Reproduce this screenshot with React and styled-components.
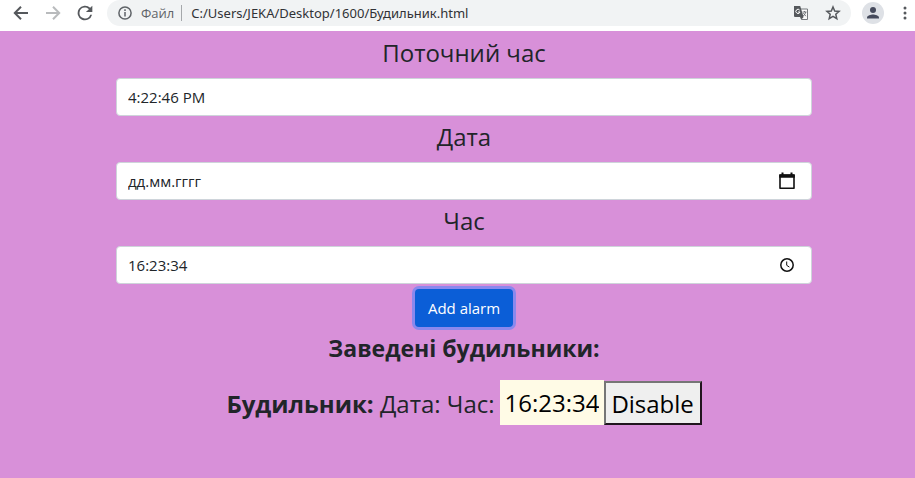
import React, { useState } from "react";
import styled, { createGlobalStyle } from "styled-components";

const GlobalStyle = createGlobalStyle`
  *, *::before, *::after { box-sizing: border-box; }
  body {
    margin: 0;
    background: #d890d9;
    color: #212529;
    font-family: "Open Sans", "Noto Sans", sans-serif;
  }
`;

const Toolbar = styled.header`
  display: flex;
  align-items: center;
  height: 31px;
  padding: 0 0 5px 10px;
  background: #fff;
`;

const IconButton = styled.button`
  display: grid;
  place-items: center;
  flex: none;
  width: ${(p) => p.$width || 32}px;
  height: 26px;
  padding: 0;
  border: 0;
  background: none;
  color: ${(p) => p.$color || "#55585c"};
`;

const AddressBar = styled.div`
  display: flex;
  align-items: center;
  flex: 1;
  min-width: 0;
  height: 26px;
  margin-left: 11px;
  padding: 0 2px 0 11px;
  border-radius: 13px;
  background: #f1f3f4;
  color: #5f6368;
`;

const Scheme = styled.span`
  margin-left: 9px;
  padding-right: 7px;
  border-right: 1px solid #a5a8ab;
  font-size: 13px;
  line-height: 16px;
`;

const UrlInput = styled.input`
  flex: 1;
  min-width: 0;
  padding: 0 0 0 9px;
  border: 0;
  outline: 0;
  background: none;
  color: #303236;
  font: 13px/20px "Noto Sans", "Open Sans", sans-serif;
`;

const Avatar = styled.span`
  display: grid;
  place-items: center;
  width: 22px;
  height: 22px;
  border-radius: 50%;
  background: #dee1e6;
`;

const Page = styled.main`
  display: flex;
  flex-direction: column;
  align-items: center;
  padding: 1px 103px 40px 116px;
`;

const Field = styled.div`
  display: flex;
  flex-direction: column;
  align-items: center;
  width: 100%;
`;

const Label = styled.label`
  height: 46px;
  font-size: 24px;
  line-height: 42px;
`;

const Control = styled.div`
  display: flex;
  align-items: center;
  width: 100%;
  height: 38px;
  padding: 0 8px 0 11px;
  border: 1px solid #ced4da;
  border-radius: 4px;
  background: #fff;
`;

const TextInput = styled.input`
  flex: 1;
  min-width: 0;
  padding: 0;
  border: 0;
  outline: 0;
  background: none;
  color: #212529;
  font: 15px/24px "Open Sans", "Noto Sans", sans-serif;

  &::placeholder {
    color: #212529;
    opacity: 1;
  }
`;

const AddButton = styled.button`
  height: 38px;
  margin-top: 5px;
  padding: 0 13px;
  border: 0;
  border-radius: 4px;
  outline: 0;
  background: #0b5ed7;
  box-shadow: 0 0 0 3px #8a88ed;
  color: #fff;
  font: 15px/24px "Open Sans", "Noto Sans", sans-serif;
`;

const Title = styled.h1`
  margin: 0 0 11px;
  font-size: 23px;
  font-weight: 700;
  line-height: 42px;
`;

const AlarmRow = styled.div`
  display: flex;
  align-items: flex-end;
  gap: 5px;
  font-size: 24px;
  line-height: 42px;
  white-space: nowrap;
`;

const AlarmControls = styled.div`
  display: flex;
  align-items: flex-end;
`;

const AlarmTime = styled.input`
  width: 104px;
  height: 45px;
  padding: 0 5px;
  border: 0;
  outline: 0;
  background: #fffbe6;
  color: #000;
  font: 24px/45px "Open Sans", "Noto Sans", sans-serif;
`;

const DisableButton = styled.button`
  width: 98px;
  height: 44px;
  padding: 2px 0 0;
  border: 2px solid;
  border-color: #767676 #21151f #21151f #767676;
  background: #efefef;
  color: #000;
  font: 24px/38px "Open Sans", "Noto Sans", sans-serif;
`;

function ArrowIcon({ forward }) {
  return (
    <svg width="16" height="16" viewBox="0 0 16 16" fill="none" stroke="currentColor" strokeWidth="2">
      <path d={forward ? "M1 8h13M8 1.8 14.2 8 8 14.2" : "M15 8H2M8 1.8 1.8 8 8 14.2"} />
    </svg>
  );
}

function ReloadIcon() {
  return (
    <svg width="22" height="22" viewBox="0 0 24 24" fill="currentColor">
      <path d="M17.65 6.35A8 8 0 1 0 19.73 14h-2.08A6 6 0 1 1 12 6c1.66 0 3.14.69 4.22 1.78L13 11h7V4z" />
    </svg>
  );
}

function InfoIcon() {
  return (
    <svg width="14" height="14" viewBox="0 0 14 14" fill="none" stroke="currentColor" strokeWidth="1.5">
      <circle cx="7" cy="7" r="6.1" />
      <path d="M7 6v4.5M7 3.3v1.6" />
    </svg>
  );
}

function TranslateIcon() {
  return (
    <svg width="16" height="16" viewBox="0 0 16 16">
      <path d="M7 4h7.5v10.5H8.5L7 11z" fill="#fafafa" stroke="#777a7e" />
      <path d="M1 1h6.2l3.4 11H2a1 1 0 0 1-1-1z" fill="#55585c" />
      <path d="M6.7 5.2A2.1 2.1 0 1 0 7 7H5" fill="none" stroke="#fff" />
      <path d="M9.5 7h4M11.5 6v1M12.8 7c-.4 1.8-1.4 3-2.6 4M10.3 8.2l2.6 3" fill="none" stroke="#66696d" strokeWidth=".9" />
      <path d="m8.5 14.5 2.1-2.5H7.5z" fill="#55585c" />
    </svg>
  );
}

function StarIcon() {
  return (
    <svg width="16" height="16" viewBox="0 0 16 16" fill="none" stroke="currentColor" strokeWidth="1.5">
      <path d="m8 2 1.7 4 4.4.4-3.3 2.9 1 4.3L8 11.3l-3.8 2.3 1-4.3-3.3-2.9 4.4-.4z" />
    </svg>
  );
}

function PersonIcon() {
  return (
    <svg width="14" height="14" viewBox="0 0 14 14" fill="#454a5c">
      <circle cx="7" cy="4" r="3" />
      <path d="M1 12.5v-1C1 9.3 5 8.4 7 8.4s6 .9 6 3.1v1z" />
    </svg>
  );
}

function MenuIcon() {
  return (
    <svg width="4" height="16" viewBox="0 0 4 16" fill="currentColor">
      <circle cx="2" cy="3" r="1.5" />
      <circle cx="2" cy="8" r="1.5" />
      <circle cx="2" cy="13" r="1.5" />
    </svg>
  );
}

function CalendarIcon() {
  return (
    <svg width="18" height="18" viewBox="0 0 18 18">
      <path d="M2 3h14v13.2H2z" fill="none" stroke="#111" strokeWidth="1.6" strokeLinejoin="round" />
      <path d="M1.2 2.4h15.6v3.4H1.2zM3.5.5h2v3h-2zM12.5.5h2v3h-2z" fill="#111" />
    </svg>
  );
}

function ClockIcon() {
  return (
    <svg width="16" height="16" viewBox="0 0 16 16" fill="none" stroke="#111">
      <circle cx="8" cy="8" r="6.2" strokeWidth="1.5" />
      <path d="M7.7 4.5v3.8l2.7 1.8" strokeWidth="1" />
    </svg>
  );
}

export default function App() {
  const [now, setNow] = useState("4:22:46 PM");
  const [date, setDate] = useState("");
  const [time, setTime] = useState("16:23:34");
  const [alarm, setAlarm] = useState("16:23:34");

  return (
    <>
      <GlobalStyle />
      <Toolbar>
        <IconButton $width={22} aria-label="Назад"><ArrowIcon /></IconButton>
        <IconButton $width={42} $color="#b9bbbd" aria-label="Вперед"><ArrowIcon forward /></IconButton>
        <IconButton $width={22} aria-label="Оновити"><ReloadIcon /></IconButton>
        <AddressBar>
          <InfoIcon />
          <Scheme>Файл</Scheme>
          <UrlInput aria-label="Адреса" defaultValue="C:/Users/JEKA/Desktop/1600/Будильник.html" />
          <IconButton aria-label="Перекласти"><TranslateIcon /></IconButton>
          <IconButton aria-label="Закладка"><StarIcon /></IconButton>
        </AddressBar>
        <IconButton $width={44} aria-label="Профіль"><Avatar><PersonIcon /></Avatar></IconButton>
        <IconButton $width={20} aria-label="Меню"><MenuIcon /></IconButton>
      </Toolbar>
      <Page>
        <Field>
          <Label htmlFor="now">Поточний час</Label>
          <Control>
            <TextInput id="now" value={now} onChange={(e) => setNow(e.target.value)} />
          </Control>
        </Field>
        <Field>
          <Label htmlFor="date">Дата</Label>
          <Control>
            <TextInput
              id="date"
              placeholder="дд.мм.гггг"
              value={date}
              onChange={(e) => setDate(e.target.value)}
            />
            <IconButton aria-label="Вибрати дату"><CalendarIcon /></IconButton>
          </Control>
        </Field>
        <Field>
          <Label htmlFor="time">Час</Label>
          <Control>
            <TextInput id="time" value={time} onChange={(e) => setTime(e.target.value)} />
            <IconButton aria-label="Вибрати час"><ClockIcon /></IconButton>
          </Control>
        </Field>
        <AddButton onClick={() => setAlarm(time)}>Add alarm</AddButton>
        <Title>Заведені будильники:</Title>
        <AlarmRow>
          <label htmlFor="alarm"><b>Будильник:</b> Дата: Час:</label>
          <AlarmControls>
            <AlarmTime id="alarm" value={alarm} onChange={(e) => setAlarm(e.target.value)} />
            <DisableButton>Disable</DisableButton>
          </AlarmControls>
        </AlarmRow>
      </Page>
    </>
  );
}
